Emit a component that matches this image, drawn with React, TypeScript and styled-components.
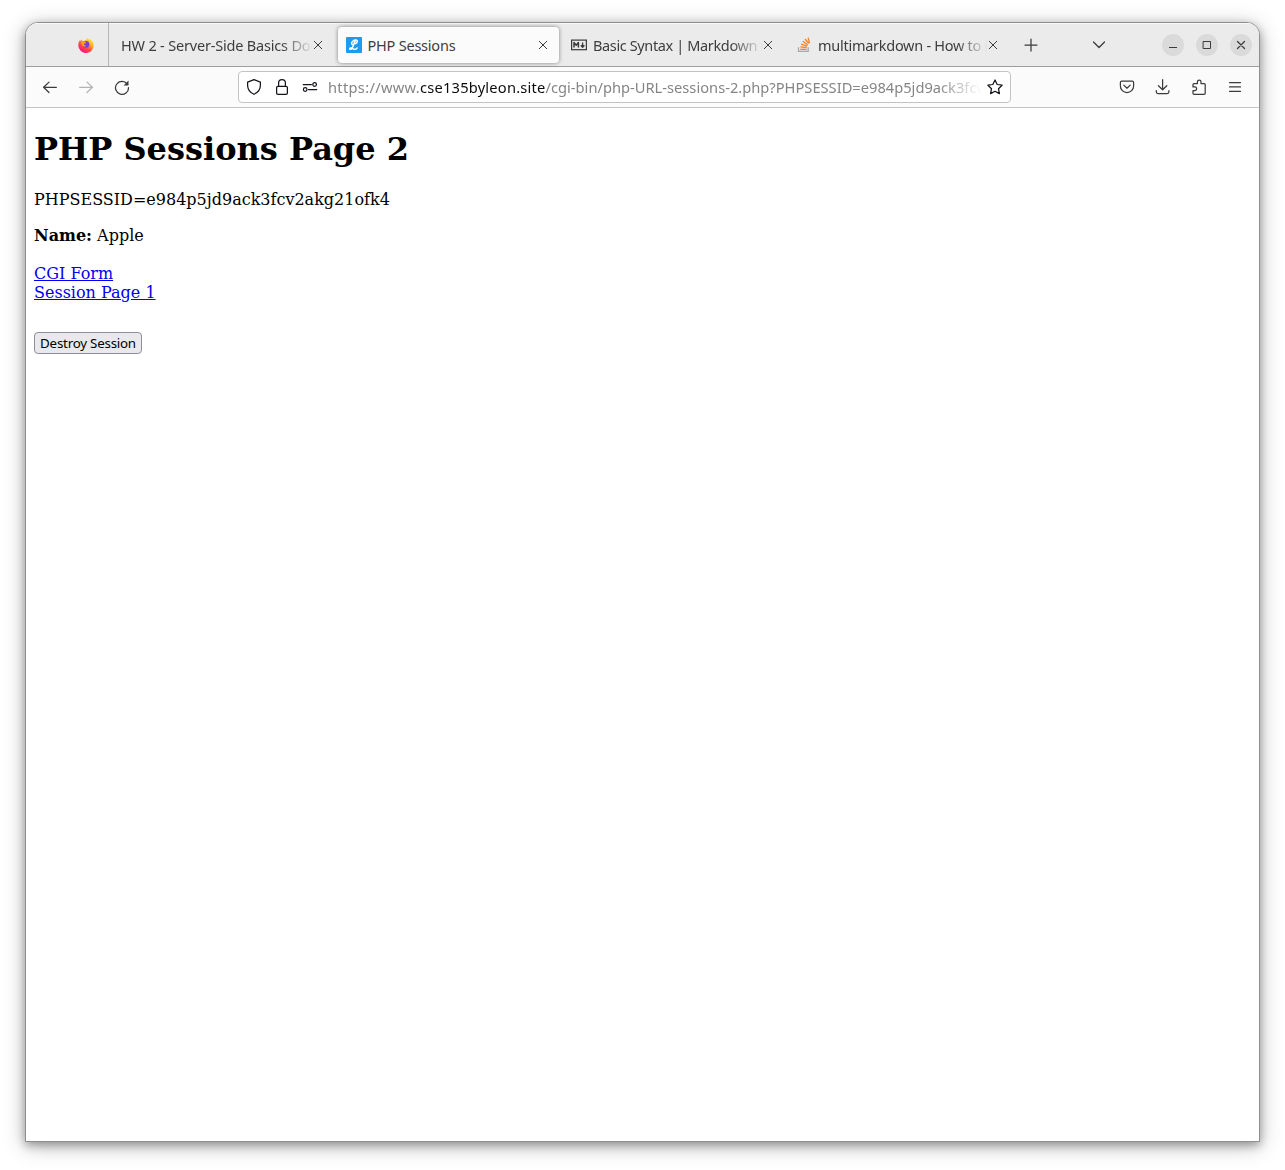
import React from "react";
import styled, { createGlobalStyle } from "styled-components";

const GlobalStyle = createGlobalStyle`
  * { box-sizing: border-box; }
  body { margin: 0; background: #fff; overflow: hidden; }
`;

const Desktop = styled.div`
  width: 1285px;
  height: 1170px;
  padding: 22px 25px 28px;
  background: #fff;
`;

const Window = styled.div`
  display: flex;
  flex-direction: column;
  width: 1235px;
  height: 1120px;
  border: 1px solid #8f8f8f;
  border-radius: 13px 13px 0 0;
  background: #fff;
  overflow: hidden;
  box-shadow: 0 3px 10px rgba(0, 0, 0, 0.32), 0 4px 22px rgba(0, 0, 0, 0.26);
`;

const TabBar = styled.div`
  display: flex;
  align-items: center;
  flex: none;
  height: 44px;
  background: #ebebeb;
  border-bottom: 1px solid #9d9d9d;
  box-shadow: inset 0 1px 0 #f8f8f8;
`;

const PinnedTab = styled.div`
  display: flex;
  align-items: center;
  justify-content: flex-end;
  width: 83px;
  height: 43px;
  padding-right: 14px;
  border-right: 1px solid #b8b8b8;
`;

const Tab = styled.div<{ $active?: boolean; $width: number; $left: number; $right?: number; $gap?: number }>`
  display: flex;
  align-items: center;
  flex: none;
  width: ${(p) => p.$width}px;
  height: 36px;
  padding: 0 ${(p) => p.$right ?? 11}px 0 ${(p) => p.$left}px;
  border-radius: 4px;
  background: ${(p) => (p.$active ? "#fbfbfb" : "transparent")};
  box-shadow: ${(p) => (p.$active ? "0 0 4px rgba(0, 0, 0, 0.45)" : "none")};
  & > svg:first-child { margin-right: ${(p) => p.$gap ?? 6}px; }
`;

const TabTitle = styled.span<{ $fade?: boolean; $spacing?: number }>`
  flex: 1;
  min-width: 0;
  overflow: hidden;
  white-space: nowrap;
  font: 14.5px/22px "Noto Sans", "Open Sans", sans-serif;
  letter-spacing: ${(p) => p.$spacing ?? 0}px;
  color: #3d3d3d;
  mask-image: ${(p) => (p.$fade ? "linear-gradient(to left, transparent 0, #000 32px)" : "none")};
`;

const TabSpacer = styled.div<{ $width: number }>`
  flex: none;
  width: ${(p) => p.$width}px;
`;

const WindowControl = styled.div`
  display: flex;
  align-items: center;
  justify-content: center;
  flex: none;
  width: 22px;
  height: 22px;
  margin-left: 12px;
  border-radius: 50%;
  background: #dadada;
`;

const Toolbar = styled.div`
  display: flex;
  align-items: center;
  flex: none;
  height: 41px;
  background: #fbfbfb;
  border-bottom: 1px solid #c6c6c6;
`;

const NavButtons = styled.div`
  display: flex;
  gap: 20px;
  width: 212px;
  padding-left: 16px;
`;

const AddressBar = styled.div`
  display: flex;
  align-items: center;
  width: 773px;
  height: 32px;
  padding: 0 7px;
  background: #fff;
  border: 1px solid #c3c3c3;
  border-radius: 4px;
`;

const SiteIcons = styled.div`
  display: flex;
  gap: 12px;
  flex: none;
  width: 82px;
`;

const Url = styled.span`
  flex: 1;
  min-width: 0;
  margin-right: 5px;
  overflow: hidden;
  white-space: nowrap;
  font: 14.67px/24px "Noto Sans", "Open Sans", sans-serif;
  color: #858585;
  mask-image: linear-gradient(to left, transparent 0, #000 44px);
`;

const UrlPart = styled.span<{ $spacing: number }>`
  letter-spacing: ${(p) => p.$spacing}px;
`;

const Domain = styled(UrlPart)`
  color: #0c0c0d;
`;

const Actions = styled.div`
  display: flex;
  gap: 20px;
  margin-left: auto;
  padding-right: 16px;
`;

const Page = styled.main`
  flex: 1;
  padding: 22px 8px 0;
  background: #fff;
  color: #000;
  font: 16px/19px "DejaVu Serif", serif;
`;

const Heading = styled.h1`
  margin: 0 0 22px;
  font-size: 32px;
  line-height: 38px;
  font-weight: bold;
`;

const Paragraph = styled.p`
  margin: 0 0 17px;
`;

const Links = styled.nav`
  display: flex;
  flex-direction: column;
  align-items: flex-start;
  margin: 19px 0 30px;
`;

const PageLink = styled.a`
  color: #0000ee;
  text-decoration: underline;
`;

const DestroyButton = styled.button`
  width: 108px;
  height: 22px;
  padding: 0;
  border: 1px solid #8f8f9d;
  border-radius: 4px;
  background: #e9e9ed;
  color: #000;
  font: 13.33px/18px "Noto Sans", "Open Sans", sans-serif;
  letter-spacing: -0.22px;
  white-space: nowrap;
`;

type IconProps = { children: React.ReactNode; color?: string; size?: number };

const Icon = ({ children, color = "#3b3b3b", size = 16 }: IconProps) => (
  <svg
    width={size}
    height={size}
    viewBox="0 0 16 16"
    fill="none"
    stroke={color}
    strokeWidth="1.25"
    strokeLinecap="round"
    strokeLinejoin="round"
    style={{ flex: "none", display: "block" }}
  >
    {children}
  </svg>
);

const CloseIcon = () => (
  <Icon size={10}>
    <path d="M2 2l12 12M14 2L2 14" strokeWidth="1.6" />
  </Icon>
);

const FirefoxIcon = () => (
  <Icon>
    <defs>
      <linearGradient id="flame" x1="13" y1="1" x2="4" y2="15" gradientUnits="userSpaceOnUse">
        <stop offset="0" stopColor="#fff04a" />
        <stop offset="0.35" stopColor="#ffb02c" />
        <stop offset="0.65" stopColor="#ff4b3e" />
        <stop offset="1" stopColor="#f0128a" />
      </linearGradient>
    </defs>
    <g stroke="none">
      <path
        fill="url(#flame)"
        d="M1.7 3.2 2.4 4 3.6 2.2 4.2 4 6 3.7 8.5 2.8 9.6.4c.3 1.3 1.4 1.9 2.3 2.7l.5-.8c1.7 1.2 3.3 3.3 3.3 6A7.7 7.7 0 0 1 .3 8.4c0-2 .5-3.8 1.4-5.2z"
      />
      <circle cx="8" cy="7.4" r="3.3" fill="#7540d8" />
      <path fill="#ff9a25" d="M3.5 4.4 6 4l2 1.2-.4 1-1.8.6.6 1.5 1.7.4-1 1.1-2.7-.9-1.2-2.2z" />
    </g>
  </Icon>
);

const SiteLogo = () => (
  <Icon>
    <rect width="16" height="16" rx="1" fill="#1d9bf0" stroke="none" />
    <path
      stroke="#fff"
      strokeWidth="1.5"
      d="M6.3 7.4C4.6 6.6 6.6 3.1 9.7 3c2.6 0 1.6 2.8-.2 3.6M9.7 3.1C7.9 4.8 8 9.4 5.6 11.6c-.9.9-2 .9-1.9.1.2-1 2.1-.7 3.4.1 1.5.9 3.1.8 4-.8"
    />
  </Icon>
);

const MarkdownIcon = () => (
  <Icon>
    <rect x=".6" y="3.1" width="14.8" height="9.6" strokeWidth="1.2" strokeLinejoin="miter" />
    <path d="M3 10.5v-5l2.2 2.7 2.2-2.7v5" strokeWidth="1.5" strokeLinecap="butt" />
    <path d="M11.6 5.4v4.2M9.8 8.3l1.8 2 1.8-2" strokeWidth="1.3" strokeLinecap="butt" />
  </Icon>
);

const StackOverflowIcon = () => (
  <Icon>
    <path d="M2.5 10.3v4.1h9.7v-4.1" stroke="#a5a9ad" strokeLinecap="butt" strokeLinejoin="miter" />
    <path
      stroke="#f48024"
      strokeWidth="1.25"
      strokeLinecap="butt"
      d="M4.2 12.4h6.4M4.4 9.9l6.3.8M5.1 7.1l6 2M6.8 4.3l5 3.7M9 2l3.8 4.7M12.1.6l1.4 5.4"
    />
  </Icon>
);

const App = () => (
  <>
    <GlobalStyle />
    <Desktop>
      <Window>
        <TabBar>
          <PinnedTab>
            <FirefoxIcon />
          </PinnedTab>
          <Tab $width={219} $left={12} $right={5}>
            <TabTitle $fade $spacing={-0.19}>HW 2 - Server-Side Basics Doc</TabTitle>
            <CloseIcon />
          </Tab>
          <TabSpacer $width={10} />
          <Tab $active $width={221} $left={8} $gap={5.5}>
            <SiteLogo />
            <TabTitle $spacing={-0.22}>PHP Sessions</TabTitle>
            <CloseIcon />
          </Tab>
          <TabSpacer $width={4} />
          <Tab $width={221} $left={8}>
            <MarkdownIcon />
            <TabTitle $fade $spacing={-0.37}>Basic Syntax | Markdown G</TabTitle>
            <CloseIcon />
          </Tab>
          <TabSpacer $width={4} />
          <Tab $width={221} $left={8}>
            <StackOverflowIcon />
            <TabTitle $fade $spacing={-0.27}>multimarkdown - How to i</TabTitle>
            <CloseIcon />
          </Tab>
          <TabSpacer $width={13.5} />
          <Icon>
            <path d="M8 2v12M2 8h12" />
          </Icon>
          <TabSpacer $width={52.5} />
          <Icon>
            <path d="M2.5 5l5.5 5.5L13.5 5" />
          </Icon>
          <TabSpacer $width={43} />
          <WindowControl>
            <Icon><path d="M4 10.5h8" strokeLinecap="butt" strokeWidth="1" /></Icon>
          </WindowControl>
          <WindowControl>
            <Icon><path d="M4.5 4.5h7v7h-7z" strokeLinejoin="miter" strokeWidth="1" /></Icon>
          </WindowControl>
          <WindowControl>
            <Icon><path d="M4.5 4.5l7 7M11.5 4.5l-7 7" /></Icon>
          </WindowControl>
        </TabBar>
        <Toolbar>
          <NavButtons>
            <Icon><path d="M14.4 8.3H1.8M7 3.1L1.6 8.3 7 13.5" /></Icon>
            <Icon color="#b4b4b4"><path d="M1.6 8.3h12.6M9 3.1l5.4 5.2L9 13.5" /></Icon>
            <Icon>
              <path d="M13.1 4.8A6.5 6.5 0 1 0 14.5 8.6" />
              <path d="M14.5 1.5v4.9H9.6z" fill="#3b3b3b" stroke="none" />
            </Icon>
          </NavButtons>
          <AddressBar>
            <SiteIcons>
              <Icon color="#15141a"><path d="M8 .7L14.4 3.2v3.1c0 4.3-2.7 7.4-6.4 9-3.7-1.6-6.4-4.7-6.4-9V3.2z" /></Icon>
              <Icon color="#15141a">
                <rect x="2.6" y="7.3" width="10.8" height="8" rx="1.4" />
                <path d="M4.6 7V4.1a3.4 3.4 0 0 1 6.8 0V7" />
              </Icon>
              <Icon color="#15141a">
                <path d="M1.2 5.5h8.2M6.5 10.5h8.2" />
                <circle cx="12.6" cy="5.5" r="1.8" />
                <circle cx="3.2" cy="10.5" r="1.8" />
              </Icon>
            </SiteIcons>
            <Url>
              <UrlPart $spacing={0.3}>https://www.</UrlPart>
              <Domain $spacing={0.21}>cse135byleon.site</Domain>
              <UrlPart $spacing={0.01}>/cgi-bin/php-URL-sessions-2.php?PHPSESSID=e984p5jd9ack3fcv</UrlPart>
            </Url>
            <Icon color="#15141a">
              <path d="M8 1l2.2 4.5 4.9.7-3.6 3.5.9 4.9L8 12.3l-4.4 2.3.9-4.9L.9 6.2l4.9-.7z" />
            </Icon>
          </AddressBar>
          <Actions>
            <Icon>
              <path d="M2.8 2.1h10.4c.8 0 1.4.6 1.4 1.4V7a6.6 6.6 0 0 1-13.2 0V3.5c0-.8.6-1.4 1.4-1.4z" />
              <path d="M4.8 6.1L8 9.2l3.2-3.1" />
            </Icon>
            <Icon>
              <path d="M7.6.7v10M3.4 6.7l4.2 4.1 4.2-4.1M1.3 11.6v1.2c0 1 .8 1.8 1.8 1.8h9c1 0 1.8-.8 1.8-1.8v-1.2" />
            </Icon>
            <Icon>
              <path d="M3 15.3c-.7 0-1-.4-1-1v-2.8h1.8a1.8 1.8 0 0 0 0-3.6H2V5.6c0-.7.4-1 1-1h3.4V3a1.8 1.8 0 0 1 3.6 0v1.6h3.2c.7 0 1 .4 1 1v8.7c0 .7-.4 1-1 1z" />
            </Icon>
            <Icon>
              <path d="M2.5 3.5h11M2.5 7.9h11M2.5 12.3h11" />
            </Icon>
          </Actions>
        </Toolbar>
        <Page>
          <Heading>PHP Sessions Page 2</Heading>
          <Paragraph>PHPSESSID=e984p5jd9ack3fcv2akg21ofk4</Paragraph>
          <Paragraph>
            <b>Name:</b> Apple
          </Paragraph>
          <Links>
            <PageLink href="#form">CGI Form</PageLink>
            <PageLink href="#page-1">Session Page 1</PageLink>
          </Links>
          <DestroyButton>Destroy Session</DestroyButton>
        </Page>
      </Window>
    </Desktop>
  </>
);

export default App;
